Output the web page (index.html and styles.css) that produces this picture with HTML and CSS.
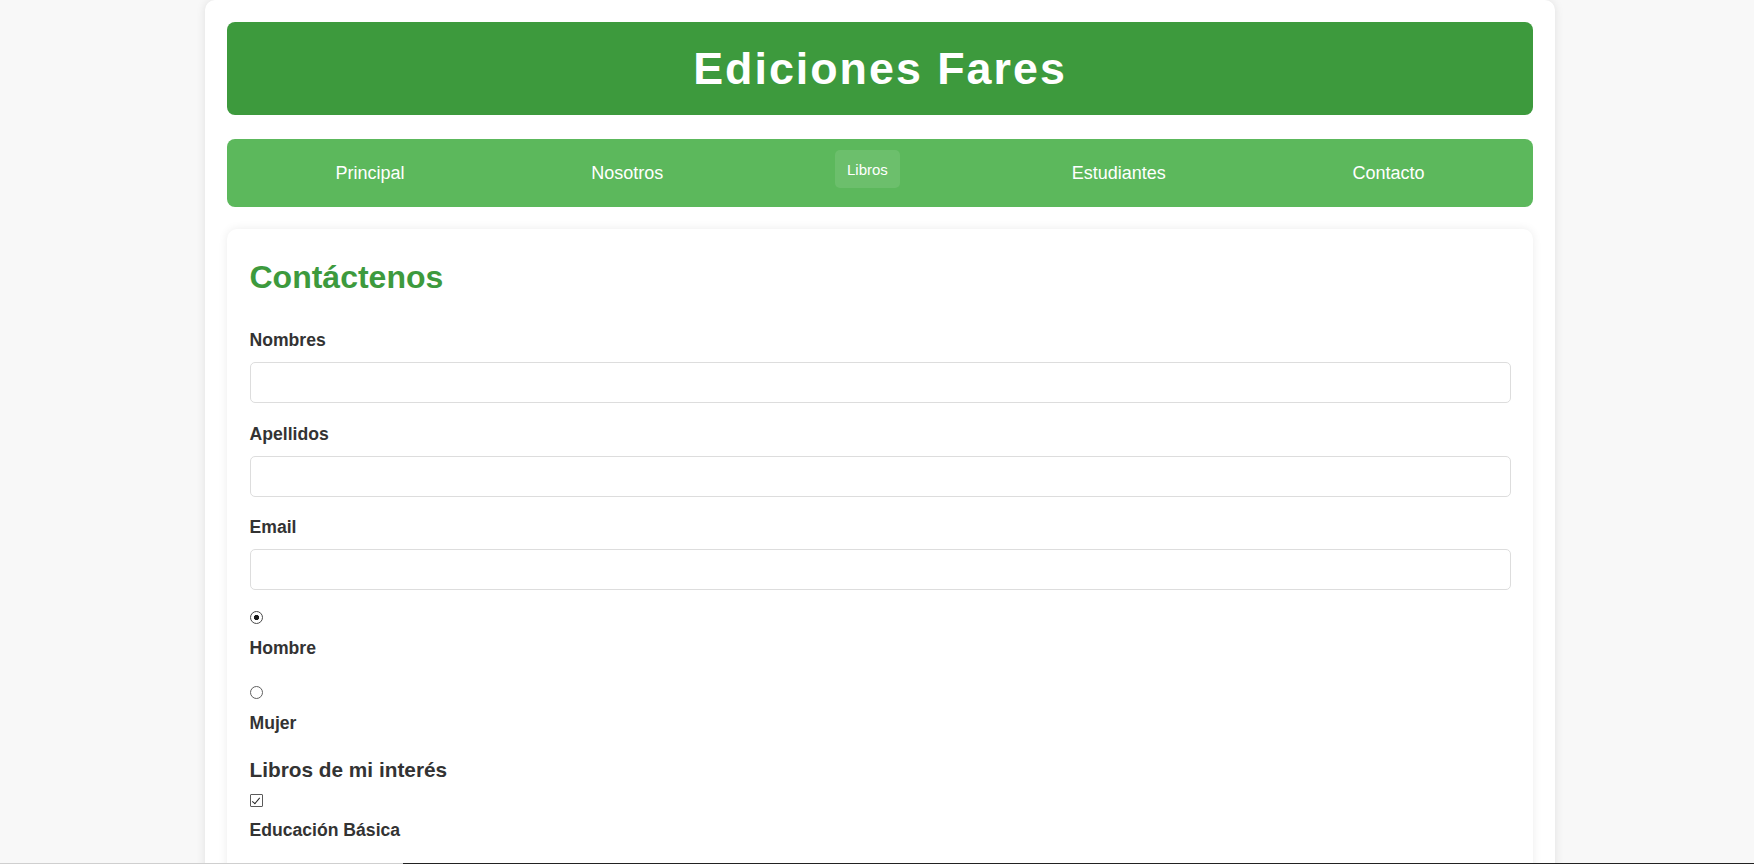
FILE: index.html
```html
<!DOCTYPE html>
<html lang="es">
<head>
<meta charset="utf-8">
<title>Ediciones Fares - Contacto</title>
<link rel="stylesheet" href="styles.css">
</head>
<body>
<div class="container">
  <header class="site-header">
    <h1>Ediciones Fares</h1>
  </header>
  <nav class="main-nav">
    <a href="#">Principal</a>
    <a href="#">Nosotros</a>
    <a href="#" class="active">Libros</a>
    <a href="#">Estudiantes</a>
    <a href="#">Contacto</a>
  </nav>
  <section class="card">
    <h2>Contáctenos</h2>
    <form>
      <div class="form-group">
        <label for="nombres">Nombres</label>
        <input type="text" id="nombres">
      </div>
      <div class="form-group">
        <label for="apellidos">Apellidos</label>
        <input type="text" id="apellidos">
      </div>
      <div class="form-group">
        <label for="email">Email</label>
        <input type="email" id="email">
      </div>
      <div class="option">
        <input type="radio" name="genero" id="hombre" checked>
        <label for="hombre">Hombre</label>
      </div>
      <div class="option">
        <input type="radio" name="genero" id="mujer">
        <label for="mujer">Mujer</label>
      </div>
      <h3>Libros de mi interés</h3>
      <div class="check">
        <input type="checkbox" id="basica" checked>
        <label for="basica">Educación Básica</label>
      </div>
      <div class="check">
        <input type="checkbox" id="media">
        <label for="media">Educación Media</label>
      </div>
      <div class="check">
        <input type="checkbox" id="superior">
        <label for="superior">Educación Superior</label>
      </div>
      <div class="form-group">
        <label for="mensaje">Mensaje</label>
        <textarea id="mensaje" rows="5"></textarea>
      </div>
      <button type="submit" class="btn">Enviar</button>
    </form>
  </section>
</div>
<div class="edge-line"></div>
</body>
</html>
```
FILE: styles.css
```css
* {
  box-sizing: border-box;
}

html, body {
  margin: 0;
}

body {
  padding: 0 0 0 6px;
  background: #f8f8f8;
  font-family: "Liberation Sans", Arial, sans-serif;
  color: #333;
}

.container {
  width: 1350px;
  margin: 0 auto;
  padding: 22px 22px 40px;
  background: #fff;
  border-radius: 10px;
  box-shadow: 0 0 10px rgba(0, 0, 0, 0.1);
}

.site-header {
  background: #3d9a3d;
  border-radius: 8px;
  padding: 21px 20px;
  margin-bottom: 23.5px;
  text-align: center;
}

.site-header h1 {
  margin: 0;
  color: #fff;
  font-size: 44.8px;
  letter-spacing: 2px;
  font-weight: bold;
  line-height: normal;
}

.main-nav {
  display: flex;
  justify-content: space-around;
  align-items: flex-start;
  background: #5cb85c;
  border-radius: 8px;
  padding: 15px;
  margin-bottom: 22px;
}

.main-nav a {
  color: #fff;
  text-decoration: none;
  font-size: 18px;
  padding: 9px 15px 8px;
  line-height: normal;
}

.main-nav a.active {
  font-size: 15px;
  padding: 11px 12px 10px;
  background: rgba(255, 255, 255, 0.1);
  border-radius: 5px;
  transform: translateY(-4px);
}

.card {
  background: #fff;
  border-radius: 10px;
  box-shadow: 0 0 10px rgba(0, 0, 0, 0.08);
  padding: 22px 22.5px 30px;
}

.card h2 {
  margin: 8px 0 34.5px;
  color: #3d9a3d;
  font-size: 32px;
  line-height: normal;
}

.card h3 {
  margin: 0 0 9px;
  font-size: 20.8px;
  line-height: normal;
  color: #333;
}

.form-group {
  margin-bottom: 20.5px;
}

.form-group label {
  display: block;
  font-weight: bold;
  font-size: 17.6px;
  margin-bottom: 11px;
}

.form-group input,
.form-group textarea {
  display: block;
  width: 100%;
  height: 41px;
  padding: 10px 12px;
  border: 1px solid #ddd;
  border-radius: 5px;
  font-family: inherit;
  font-size: 16px;
  background: #fff;
}

.form-group textarea {
  height: auto;
  resize: vertical;
}

.option {
  margin-bottom: 24.6px;
}

.option + .option {
  padding-top: 2.8px;
}

.check {
  padding-top: 3px;
  margin-bottom: 25.2px;
}

.option input,
.check input {
  display: block;
  width: 13px;
  height: 13px;
  margin: 0;
  -webkit-appearance: none;
  appearance: none;
  background: #fff;
}

.option input {
  border: 1px solid #5f5f5f;
  border-radius: 50%;
}

.option input:checked {
  border: 1.5px solid #4a4a4a;
  background: radial-gradient(circle, #1a1a1a 0 2.4px, #fff 2.9px);
}

.check input {
  border: 1px solid #5a5a5a;
  border-radius: 1px;
  position: relative;
}

.check input:checked::after {
  content: "";
  position: absolute;
  left: 3.5px;
  top: 1px;
  width: 3px;
  height: 7px;
  border: solid #222;
  border-width: 0 1.3px 1.3px 0;
  transform: rotate(40deg);
}

.option label,
.check label {
  display: block;
  margin-top: 14px;
  font-weight: bold;
  font-size: 17.6px;
  line-height: normal;
}

.check label {
  margin-top: 13px;
}

.btn {
  background: #3d9a3d;
  color: #fff;
  border: none;
  border-radius: 5px;
  padding: 12px 24px;
  font-family: inherit;
  font-size: 16px;
  font-weight: bold;
}

.edge-line {
  position: fixed;
  left: 0;
  right: 0;
  bottom: 0;
  height: 1px;
  background: linear-gradient(to right, #cfcfcf 403px, #222 403px);
}
```
